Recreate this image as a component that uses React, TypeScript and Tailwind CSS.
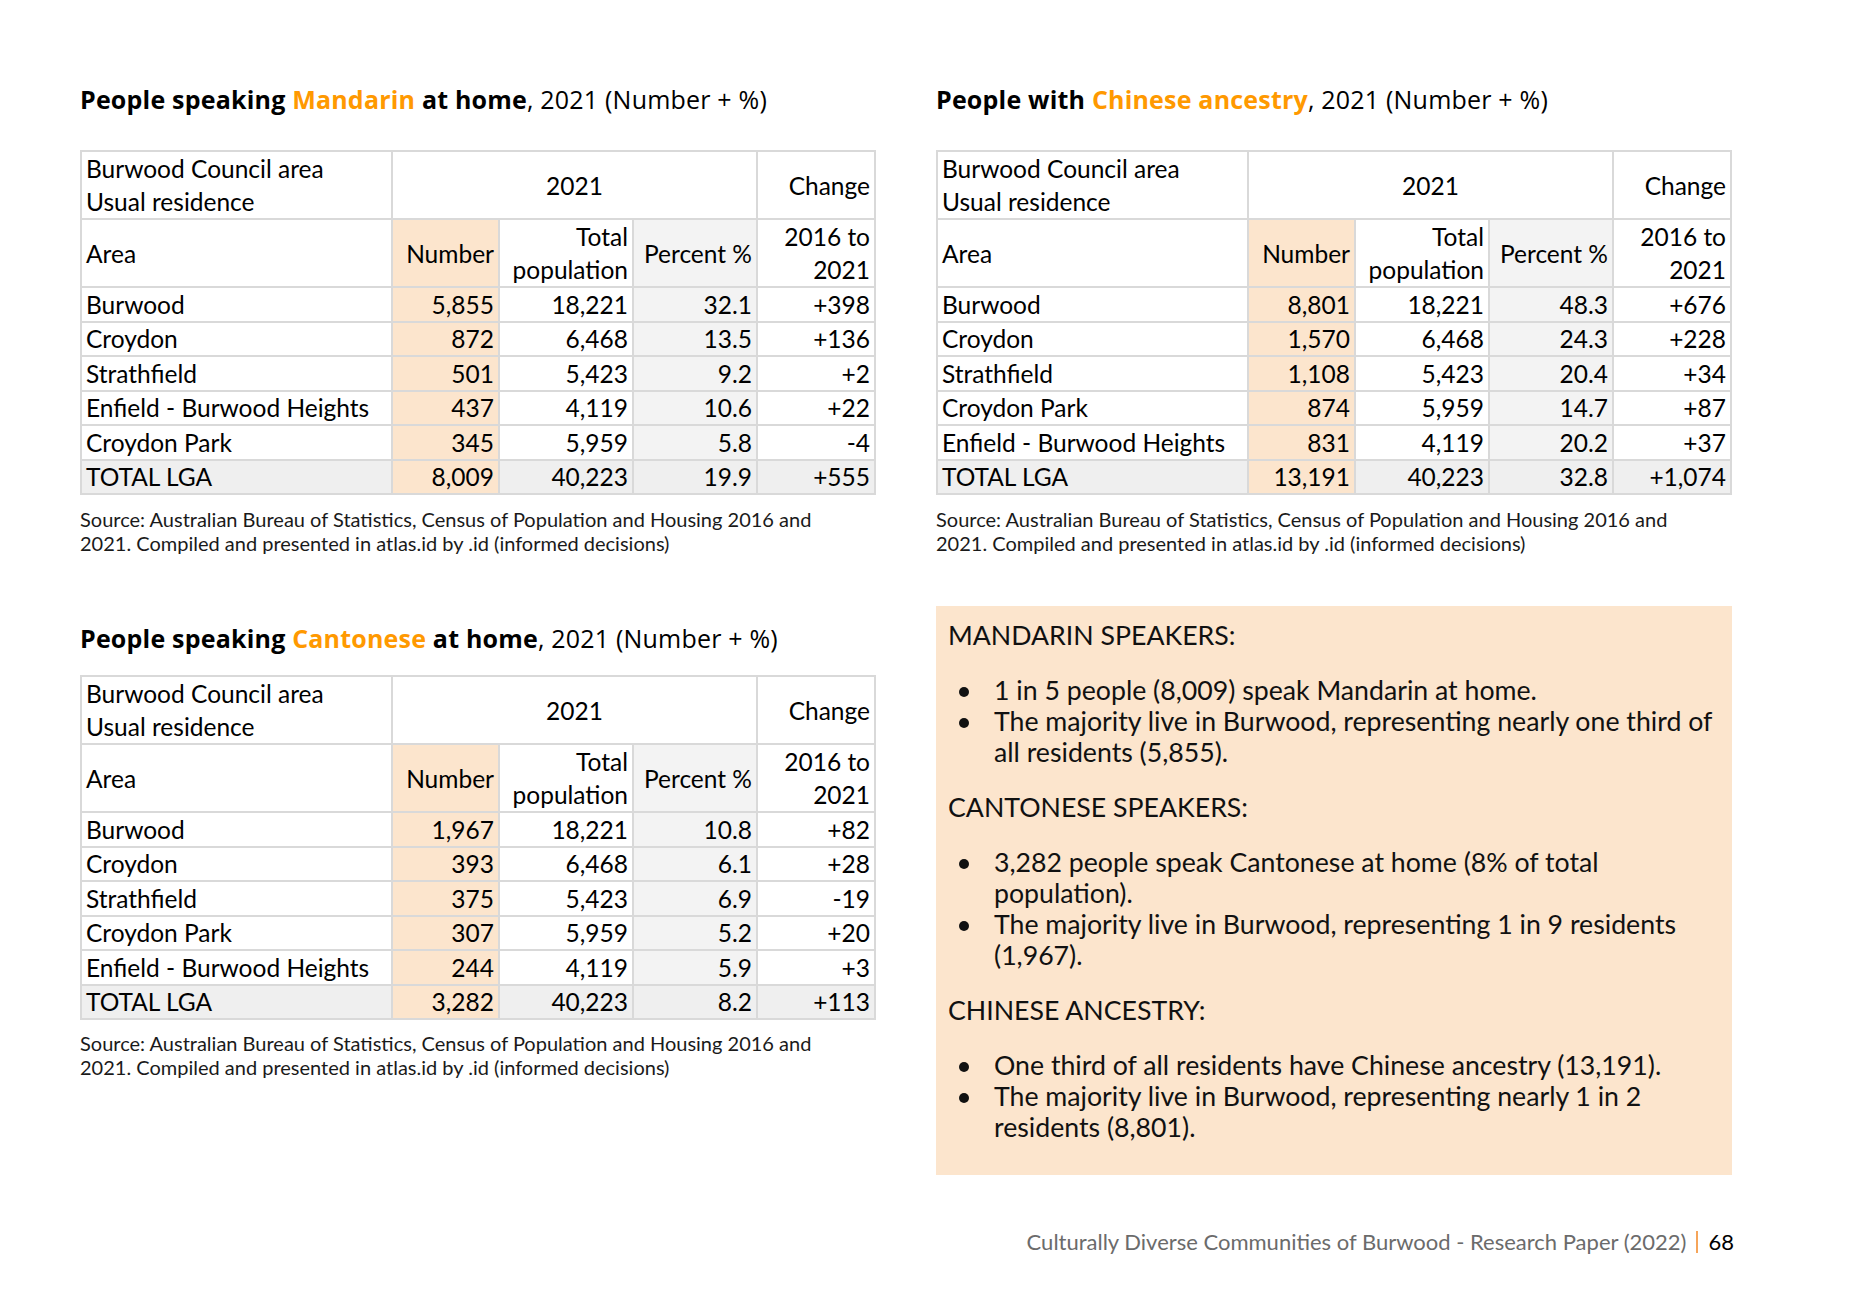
import React from "react";

type Row = [string, string, string, string, string];

const mandarin: Row[] = [
  ["Burwood", "5,855", "18,221", "32.1", "+398"],
  ["Croydon", "872", "6,468", "13.5", "+136"],
  ["Strathfield", "501", "5,423", "9.2", "+2"],
  ["Enfield - Burwood Heights", "437", "4,119", "10.6", "+22"],
  ["Croydon Park", "345", "5,959", "5.8", "-4"],
];
const mandarinTotal: Row = ["TOTAL LGA", "8,009", "40,223", "19.9", "+555"];

const ancestry: Row[] = [
  ["Burwood", "8,801", "18,221", "48.3", "+676"],
  ["Croydon", "1,570", "6,468", "24.3", "+228"],
  ["Strathfield", "1,108", "5,423", "20.4", "+34"],
  ["Croydon Park", "874", "5,959", "14.7", "+87"],
  ["Enfield - Burwood Heights", "831", "4,119", "20.2", "+37"],
];
const ancestryTotal: Row = ["TOTAL LGA", "13,191", "40,223", "32.8", "+1,074"];

const cantonese: Row[] = [
  ["Burwood", "1,967", "18,221", "10.8", "+82"],
  ["Croydon", "393", "6,468", "6.1", "+28"],
  ["Strathfield", "375", "5,423", "6.9", "-19"],
  ["Croydon Park", "307", "5,959", "5.2", "+20"],
  ["Enfield - Burwood Heights", "244", "4,119", "5.9", "+3"],
];
const cantoneseTotal: Row = ["TOTAL LGA", "3,282", "40,223", "8.2", "+113"];

const cell = "border-2 border-[#d9d9d9] px-[4px] py-0 align-middle";
const head = `${cell} leading-[33px]`;

function Title({ pre, hl, post }: { pre: string; hl: string; post: string }) {
  return (
    <h2 className="font-['Open_Sans',sans-serif] text-[25px] leading-[30px] tracking-[0.2px] text-black whitespace-nowrap">
      <span className="font-bold">{pre} </span>
      <span className="font-bold text-[#ff9900]">{hl}</span>
      <span className="font-bold">{post}</span>
      <span>, 2021 (Number + %)</span>
    </h2>
  );
}

function DataTable({ rows, total }: { rows: Row[]; total: Row }) {
  return (
    <table className="table-fixed border-collapse w-[794px] text-[24.5px] leading-[29px] text-black">
      <colgroup>
        <col className="w-[311px]" />
        <col className="w-[107px]" />
        <col className="w-[134px]" />
        <col className="w-[124px]" />
        <col className="w-[118px]" />
      </colgroup>
      <tbody>
        <tr className="h-[68px]">
          <td className={`${head} text-left`}>
            Burwood Council area
            <br />
            Usual residence
          </td>
          <td className={`${head} text-center`} colSpan={3}>
            2021
          </td>
          <td className={`${head} text-right`}>Change</td>
        </tr>
        <tr className="h-[66px]">
          <td className={`${head} text-left`}>Area</td>
          <td className={`${head} text-right bg-[#fce5cd]`}>Number</td>
          <td className={`${head} text-right`}>
            Total
            <br />
            population
          </td>
          <td className={`${head} text-right bg-[#f3f3f3]`}>Percent %</td>
          <td className={`${head} text-right`}>
            2016 to
            <br />
            2021
          </td>
        </tr>
        {rows.map((r) => (
          <tr key={r[0]} className="h-[34.5px]">
            <td className={`${cell} text-left whitespace-nowrap`}>{r[0]}</td>
            <td className={`${cell} text-right bg-[#fce5cd]`}>{r[1]}</td>
            <td className={`${cell} text-right`}>{r[2]}</td>
            <td className={`${cell} text-right bg-[#f3f3f3]`}>{r[3]}</td>
            <td className={`${cell} text-right`}>{r[4]}</td>
          </tr>
        ))}
        <tr className="h-[34.5px] bg-[#efefef]">
          <td className={`${cell} text-left`}>{total[0]}</td>
          <td className={`${cell} text-right bg-[#fce5cd]`}>{total[1]}</td>
          <td className={`${cell} text-right`}>{total[2]}</td>
          <td className={`${cell} text-right`}>{total[3]}</td>
          <td className={`${cell} text-right`}>{total[4]}</td>
        </tr>
      </tbody>
    </table>
  );
}

function Source() {
  return (
    <p className="text-[20px] leading-[24px] text-[#1a1a1a] whitespace-nowrap">
      Source: Australian Bureau of Statistics, Census of Population and Housing 2016 and
      <br />
      2021. Compiled and presented in atlas.id by .id (informed decisions)
    </p>
  );
}

function Bullet({ children }: { children: React.ReactNode }) {
  return (
    <li className="flex">
      <span className="w-[46px] shrink-0 flex items-start pt-[12px] pl-[11px]">
        <span className="w-[10px] h-[10px] rounded-full bg-[#111]" />
      </span>
      <span className="whitespace-nowrap">{children}</span>
    </li>
  );
}

export default function App() {
  return (
    <div className="w-[1855px] h-[1312px] bg-white font-['Lato',sans-serif] text-black">
      <div className="flex gap-[62px] pl-[80px] pt-[84px]">
        <div className="w-[794px] flex flex-col">
          <Title pre="People speaking" hl="Mandarin" post=" at home" />
          <div className="mt-[36px]">
            <DataTable rows={mandarin} total={mandarinTotal} />
          </div>
          <div className="mt-[12px]">
            <Source />
          </div>
          <div className="mt-[68px]">
            <Title pre="People speaking" hl="Cantonese" post=" at home" />
          </div>
          <div className="mt-[22px]">
            <DataTable rows={cantonese} total={cantoneseTotal} />
          </div>
          <div className="mt-[11px]">
            <Source />
          </div>
        </div>

        <div className="w-[796px] flex flex-col">
          <Title pre="People with" hl="Chinese ancestry" post="" />
          <div className="mt-[36px]">
            <DataTable rows={ancestry} total={ancestryTotal} />
          </div>
          <div className="mt-[12px]">
            <Source />
          </div>
          <div className="mt-[51px] h-[569px] bg-[#fce5cd] pl-[12px] pr-[12px] pt-[14px] text-[26.7px] leading-[31px] text-[#111]">
            <p>MANDARIN SPEAKERS:</p>
            <ul className="mt-[24px]">
              <Bullet>1 in 5 people (8,009) speak Mandarin at home.</Bullet>
              <Bullet>
                The majority live in Burwood, representing nearly one third of
                <br />
                all residents (5,855).
              </Bullet>
            </ul>
            <p className="mt-[24px]">CANTONESE SPEAKERS:</p>
            <ul className="mt-[24px]">
              <Bullet>
                3,282 people speak Cantonese at home (8% of total
                <br />
                population).
              </Bullet>
              <Bullet>
                The majority live in Burwood, representing 1 in 9 residents
                <br />
                (1,967).
              </Bullet>
            </ul>
            <p className="mt-[24px]">CHINESE ANCESTRY:</p>
            <ul className="mt-[24px]">
              <Bullet>One third of all residents have Chinese ancestry (13,191).</Bullet>
              <Bullet>
                The majority live in Burwood, representing nearly 1 in 2
                <br />
                residents (8,801).
              </Bullet>
            </ul>
          </div>
        </div>
      </div>

      <div className="flex justify-end items-center pr-[121px] mt-[53px] text-[22px] leading-[28px]">
        <span className="text-[#6b6b6b]">
          Culturally Diverse Communities of Burwood - Research Paper (2022)
        </span>
        <span className="mx-[10px] w-[2px] h-[22px] bg-[#f6a55a]" />
        <span className="text-black">68</span>
      </div>
    </div>
  );
}
